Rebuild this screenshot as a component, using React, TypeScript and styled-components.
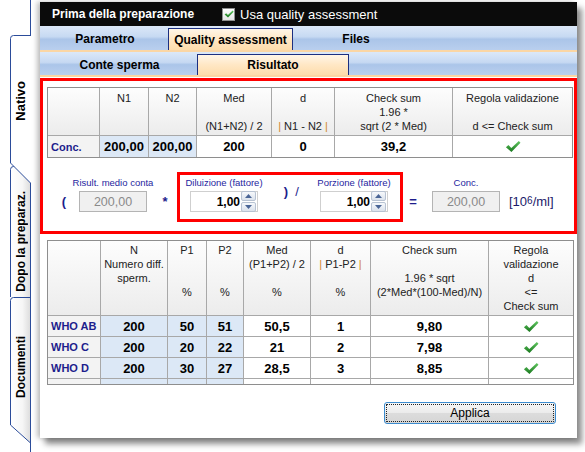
import * as React from 'react'
import styled, { createGlobalStyle } from 'styled-components'

const GlobalStyle = createGlobalStyle`
  html, body {
    margin: 0;
    padding: 0;
    background: #fff;
  }
  body {
    font-family: 'Liberation Sans', Arial, sans-serif;
  }
`

const NAVY = '#1d1d8c'
const TAB_LINE = '#2b4c9a'

const Page = styled.div`
  display: flex;
  width: 585px;
  height: 452px;
  overflow: hidden;
`

/* ---------- left vertical tabs ---------- */

const SideStrip = styled.div`
  width: 40px;
  flex: none;
  display: flex;
  flex-direction: column;
`

const SideTop = styled.div`
  width: 31px;
  height: 35px;
  flex: none;
  box-sizing: border-box;
  border-right: 1px solid ${TAB_LINE};
`

const SideTab = styled.div<{ $h: number; $overlap?: number; $front?: boolean; $padTop?: number; $padBottom?: number }>`
  position: relative;
  width: 31px;
  height: ${p => p.$h}px;
  flex: none;
  margin-top: ${p => -(p.$overlap || 0)}px;
  z-index: ${p => (p.$front ? 2 : 1)};
  box-sizing: border-box;
  padding: ${p => p.$padTop || 0}px 0 ${p => p.$padBottom || 0}px 10px;
  display: flex;
  align-items: center;
  justify-content: center;
`

const TabShape = styled.svg`
  position: absolute;
  left: 0;
  top: 0;
  z-index: -1;
`

const SideLabel = styled.span<{ $size: number }>`
  writing-mode: vertical-rl;
  transform: rotate(180deg);
  font-weight: bold;
  font-size: ${p => p.$size}px;
  color: #000;
  white-space: nowrap;
`

const SideTabs: React.FC = () => (
  <SideStrip>
    <SideTop />
    <SideTab $h={148} $front $padBottom={16}>
      <TabShape width={31} height={148}>
        <path d="M31 0.5 H13.5 Q10.5 0.5 10.5 3.5 V128 L30.5 148 H31 Z" fill="#fff" />
        <path d="M31 0.5 H13.5 Q10.5 0.5 10.5 3.5 V128 L30.5 148" fill="none" stroke={TAB_LINE} />
      </TabShape>
      <SideLabel $size={13}>Nativo</SideLabel>
    </SideTab>
    <SideTab $h={131} $overlap={17} $padTop={20}>
      <TabShape width={31} height={131}>
        <defs>
          <linearGradient id="tabFillA" x1="0" x2="1" y1="0" y2="0">
            <stop offset="0" stopColor="#ffffff" />
            <stop offset="0.6" stopColor="#f6f6f6" />
            <stop offset="1" stopColor="#dcdcdc" />
          </linearGradient>
        </defs>
        <path d="M30.5 0.5 H13.5 Q10.5 0.5 10.5 3.5 V131 H30.5 Z" fill="url(#tabFillA)" />
        <path d="M30.5 0.5 H13.5 Q10.5 0.5 10.5 3.5 V131 M30.5 0 V131" fill="none" stroke={TAB_LINE} />
      </TabShape>
      <SideLabel $size={12}>Dopo la preparaz.</SideLabel>
    </SideTab>
    <SideTab $h={155} $padBottom={14}>
      <TabShape width={31} height={155}>
        <defs>
          <linearGradient id="tabFillB" x1="0" x2="1" y1="0" y2="0">
            <stop offset="0" stopColor="#ffffff" />
            <stop offset="0.6" stopColor="#f6f6f6" />
            <stop offset="1" stopColor="#dcdcdc" />
          </linearGradient>
        </defs>
        <path d="M30.5 0.5 H13.5 Q10.5 0.5 10.5 3.5 V128 L30.5 146 Z" fill="url(#tabFillB)" />
        <path d="M30.5 0.5 H13.5 Q10.5 0.5 10.5 3.5 V128 L30.5 146 M30.5 0 V155" fill="none" stroke={TAB_LINE} />
      </TabShape>
      <SideLabel $size={12}>Documenti</SideLabel>
    </SideTab>
  </SideStrip>
)

/* ---------- dialog ---------- */

const Dialog = styled.div`
  width: 537px;
  height: 436px;
  margin-top: 2px;
  flex: none;
  display: flex;
  flex-direction: column;
  background: #fff;
  box-shadow: -3px 0 5px rgba(0, 0, 0, 0.25), 5px 6px 6px rgba(0, 0, 0, 0.45);
`

const TitleBar = styled.div`
  height: 24px;
  flex: none;
  display: flex;
  align-items: center;
  padding-left: 12px;
  background: #0b0b0b;
  color: #fff;
`

const TitleText = styled.span`
  font-weight: bold;
  font-size: 12px;
`

const CheckLabel = styled.span`
  display: flex;
  align-items: center;
  gap: 5px;
  margin-left: 28px;
  font-size: 13px;
`

const CheckBox = styled.span`
  width: 13px;
  height: 13px;
  box-sizing: border-box;
  border: 1px solid #8e8f8f;
  background: linear-gradient(#ffffff, #e4e4e4);
  display: flex;
  align-items: center;
  justify-content: center;
`

const TabRow = styled.div<{ $h: number }>`
  height: ${p => p.$h}px;
  flex: none;
  display: flex;
  align-items: flex-end;
  padding-left: 2px;
  background: linear-gradient(#dce8f8 0%, #c6d9f2 45%, #abc5e9 55%, #b9cfee 100%);
`

const TabItem = styled.div<{ $w: number; $active?: boolean }>`
  width: ${p => p.$w}px;
  height: calc(100% - 2px);
  box-sizing: border-box;
  display: flex;
  align-items: center;
  justify-content: center;
  font-weight: bold;
  font-size: 12px;
  color: #000;
  ${p =>
    p.$active
      ? `
    border: 1px solid #1c2f80;
    border-bottom: none;
    background: linear-gradient(#fff6e8, #ffe7c4 50%, #fddcab);
  `
      : ''}
`

const TabDivider = styled.div`
  height: 2px;
  flex: none;
  background: #fbd6a4;
`

const Content = styled.div`
  flex: 1;
  display: flex;
  flex-direction: column;
  padding-top: 1px;
`

const Highlight = styled.div`
  height: 156px;
  flex: none;
  box-sizing: border-box;
  border: 3px solid #ff0000;
  padding: 6px 1px 0 4px;
  display: flex;
  flex-direction: column;
`

/* ---------- tables ---------- */

const Frame = styled.div<{ $w: number; $h?: number; $ml?: number; $mt?: number }>`
  width: ${p => p.$w}px;
  ${p => (p.$h ? `height: ${p.$h}px;` : '')}
  margin-left: ${p => p.$ml || 0}px;
  margin-top: ${p => p.$mt || 0}px;
  box-sizing: border-box;
  border: 1px solid #8e8e8e;
  overflow: hidden;
  flex: none;
`

const Grid = styled.div<{ $cols: number[]; $head: number; $row: number }>`
  display: grid;
  grid-template-columns: ${p => p.$cols.map(c => `${c}px`).join(' ')};
  grid-template-rows: ${p => p.$head}px;
  grid-auto-rows: ${p => p.$row}px;
  gap: 1px;
  background: #a8a8a8;
`

const HeadCell = styled.div<{ $pt: number }>`
  background: linear-gradient(#fdfdfd, #ececec);
  padding-top: ${p => p.$pt}px;
  text-align: center;
  font-size: 11px;
  color: #222;
`

const HeadLine = styled.div`
  height: 14px;
  line-height: 14px;
  white-space: nowrap;
`

const Bar = styled.span`
  color: #d2862a;
`

const LabelCell = styled.div`
  background: #f3f3f3;
  color: ${NAVY};
  font-weight: bold;
  font-size: 11px;
  display: flex;
  align-items: center;
  padding-left: 3px;
  white-space: nowrap;
`

const ValueCell = styled.div<{ $tint?: boolean }>`
  background: ${p => (p.$tint ? '#dce8f6' : '#fff')};
  font-weight: bold;
  font-size: 13px;
  color: #000;
  display: flex;
  align-items: center;
  justify-content: center;
`

const CheckMark: React.FC<{ size?: number }> = ({ size = 16 }) => (
  <svg width={size} height={size * 0.8} viewBox="0 0 16 13">
    <defs>
      <linearGradient id="okGrad" x1="0" x2="0" y1="0" y2="1">
        <stop offset="0" stopColor="#62c862" />
        <stop offset="1" stopColor="#17761c" />
      </linearGradient>
    </defs>
    <path d="M0.8 7.4 L3.4 5.2 L6.3 8.2 L13.9 1 L15.6 2.7 L6.4 12.2 Z" fill="url(#okGrad)" />
  </svg>
)

const renderHead = (lines: React.ReactNode[]) =>
  lines.map((l, i) => <HeadLine key={i}>{l === '' ? '\u00a0' : l}</HeadLine>)

const concHead: React.ReactNode[][] = [
  [],
  ['N1'],
  ['N2'],
  ['Med', '', '(N1+N2) / 2'],
  ['d', '', <><Bar>|</Bar> N1 - N2 <Bar>|</Bar></>],
  ['Check sum', '1.96 *', 'sqrt (2 * Med)'],
  ['Regola validazione', '', 'd <= Check sum'],
]

const morphHead: React.ReactNode[][] = [
  [],
  ['N', 'Numero diff.', 'sperm.'],
  ['P1', '', '', '%'],
  ['P2', '', '', '%'],
  ['Med', '(P1+P2) / 2', '', '%'],
  ['d', <><Bar>|</Bar> P1-P2 <Bar>|</Bar></>, '', '%'],
  ['Check sum', '', '1.96 * sqrt', '(2*Med*(100-Med)/N)'],
  ['Regola', 'validazione', 'd', '<=', 'Check sum'],
]

interface MorphRow {
  label: string
  n: string
  p1: string
  p2: string
  med: string
  d: string
  check: string
}

const morphRows: MorphRow[] = [
  { label: 'WHO AB', n: '200', p1: '50', p2: '51', med: '50,5', d: '1', check: '9,80' },
  { label: 'WHO C', n: '200', p1: '20', p2: '22', med: '21', d: '2', check: '7,98' },
  { label: 'WHO D', n: '200', p1: '30', p2: '27', med: '28,5', d: '3', check: '8,85' },
  { label: 'Mot. A', n: '200', p1: '45', p2: '44', med: '44,5', d: '1', check: '9,74' },
]

/* ---------- calculation row ---------- */

const CalcRow = styled.div`
  display: flex;
  align-items: flex-end;
  margin-top: 14px;
  height: 50px;
  flex: none;
`

const Sym = styled.span<{ $w: number; $ml?: number; $thin?: boolean }>`
  width: ${p => p.$w}px;
  margin-left: ${p => p.$ml || 0}px;
  height: 21px;
  margin-bottom: 10px;
  display: flex;
  align-items: center;
  justify-content: center;
  color: ${NAVY};
  font-weight: ${p => (p.$thin ? 'normal' : 'bold')};
  font-size: 13px;
  flex: none;
`

const Field = styled.div<{ $w: number; $ml?: number; $inBox?: boolean }>`
  width: ${p => p.$w}px;
  margin-left: ${p => p.$ml || 0}px;
  margin-bottom: ${p => (p.$inBox ? 0 : 10)}px;
  display: flex;
  flex-direction: column;
  align-items: center;
  flex: none;
`

const FieldLabel = styled.div`
  height: 12px;
  line-height: 12px;
  margin-bottom: 2px;
  font-size: 9.5px;
  color: #2626a0;
  white-space: nowrap;
`

const ReadOnlyBox = styled.div`
  width: 68px;
  height: 21px;
  box-sizing: border-box;
  border: 1px solid #b4b4b4;
  background: #f0f0f0;
  color: #8a8a8a;
  font-size: 12.5px;
  display: flex;
  align-items: center;
  justify-content: center;
`

const SpinBox = styled.div`
  width: 68px;
  height: 21px;
  box-sizing: border-box;
  border: 1px solid #cfcfcf;
  background: #fff;
  display: flex;
  align-items: center;
  padding-right: 1px;
`

const SpinValue = styled.span`
  flex: 1;
  text-align: right;
  font-weight: bold;
  font-size: 12px;
  color: #000;
  padding-right: 1px;
`

const SpinButtons = styled.div`
  width: 15px;
  display: flex;
  flex-direction: column;
  gap: 1px;
`

const SpinButton = styled.div`
  height: 8px;
  border: 1px solid #b7c2d2;
  border-radius: 2px;
  background: linear-gradient(#f6f8fb, #dbe2ec);
  display: flex;
  align-items: center;
  justify-content: center;
`

const ParamBox = styled.div`
  height: 50px;
  box-sizing: border-box;
  margin-left: 6px;
  padding: 2px 6px 7px 4px;
  border: 3px solid #ff0000;
  display: flex;
  align-items: flex-end;
  flex: none;
`

const Unit = styled.span`
  margin-left: 3px;
  margin-bottom: 10px;
  height: 21px;
  display: flex;
  align-items: center;
  font-size: 13px;
  color: #1a1a6a;
  white-space: nowrap;
  sup {
    font-size: 10px;
    line-height: 0;
    position: relative;
    top: -1px;
  }
`

const Triangle: React.FC<{ up?: boolean }> = ({ up }) => (
  <svg width="7" height="4" viewBox="0 0 7 4">
    <path d={up ? 'M0 4 L3.5 0 L7 4 Z' : 'M0 0 L3.5 4 L7 0 Z'} fill="#4a6596" />
  </svg>
)

const Spin: React.FC<{ value: string }> = ({ value }) => (
  <SpinBox>
    <SpinValue>{value}</SpinValue>
    <SpinButtons>
      <SpinButton><Triangle up /></SpinButton>
      <SpinButton><Triangle /></SpinButton>
    </SpinButtons>
  </SpinBox>
)

/* ---------- footer ---------- */

const Footer = styled.div`
  display: flex;
  justify-content: flex-end;
  padding-right: 21px;
  margin-top: 17px;
`

const ApplyButton = styled.button`
  width: 172px;
  height: 22px;
  padding: 0;
  border: 1px solid #3c8ccf;
  border-radius: 3px;
  background: linear-gradient(#f7f7f7, #ebebeb 50%, #dcdcdc 51%, #d6d6d6);
  font-family: 'Liberation Sans', Arial, sans-serif;
  font-size: 12px;
  color: #000;
  outline: 1px dotted #222;
  outline-offset: -3px;
`

const CONC_COLS = [51, 48, 47, 74, 62, 117, 119]
const MORPH_COLS = [52, 66, 38, 36, 66, 59, 117, 84]

export default function App() {
  return (
    <Page>
      <GlobalStyle />
      <SideTabs />
      <Dialog>
        <TitleBar>
          <TitleText>Prima della preparazione</TitleText>
          <CheckLabel>
            <CheckBox>
              <CheckMark size={10} />
            </CheckBox>
            Usa quality assessment
          </CheckLabel>
        </TitleBar>
        <TabRow $h={24}>
          <TabItem $w={126}>Parametro</TabItem>
          <TabItem $w={125} $active>Quality assessment</TabItem>
          <TabItem $w={126}>Files</TabItem>
        </TabRow>
        <TabDivider />
        <TabRow $h={23}>
          <TabItem $w={155}>Conte sperma</TabItem>
          <TabItem $w={152} $active>Risultato</TabItem>
        </TabRow>
        <TabDivider />
        <Content>
          <Highlight>
            <Frame $w={526}>
              <Grid $cols={CONC_COLS} $head={47} $row={21}>
                {concHead.map((h, i) => (
                  <HeadCell key={i} $pt={3}>{renderHead(h)}</HeadCell>
                ))}
                <LabelCell>Conc.</LabelCell>
                <ValueCell $tint>200,00</ValueCell>
                <ValueCell $tint>200,00</ValueCell>
                <ValueCell>200</ValueCell>
                <ValueCell>0</ValueCell>
                <ValueCell>39,2</ValueCell>
                <ValueCell><CheckMark /></ValueCell>
              </Grid>
            </Frame>
            <CalcRow>
              <Sym $w={12} $ml={11}>(</Sym>
              <Field $w={84} $ml={1}>
                <FieldLabel>Risult. medio conta</FieldLabel>
                <ReadOnlyBox>200,00</ReadOnlyBox>
              </Field>
              <Sym $w={12} $ml={4}>*</Sym>
              <ParamBox>
                <Field $w={80} $inBox>
                  <FieldLabel>Diluizione (fattore)</FieldLabel>
                  <Spin value="1,00" />
                </Field>
                <Sym $w={10} $ml={17}>)</Sym>
                <Sym $w={10} $ml={1} $thin>/</Sym>
                <Field $w={80} $ml={12} $inBox>
                  <FieldLabel>Porzione (fattore)</FieldLabel>
                  <Spin value="1,00" />
                </Field>
              </ParamBox>
              <Sym $w={12} $ml={4}>=</Sym>
              <Field $w={80} $ml={7}>
                <FieldLabel>Conc.</FieldLabel>
                <ReadOnlyBox>200,00</ReadOnlyBox>
              </Field>
              <Unit>
                [10<sup>6</sup>/ml]
              </Unit>
            </CalcRow>
          </Highlight>
          <Frame $w={527} $h={145} $ml={7} $mt={6}>
            <Grid $cols={MORPH_COLS} $head={74} $row={20}>
              {morphHead.map((h, i) => (
                <HeadCell key={i} $pt={2}>{renderHead(h)}</HeadCell>
              ))}
              {morphRows.map(r => (
                <React.Fragment key={r.label}>
                  <LabelCell>{r.label}</LabelCell>
                  <ValueCell $tint>{r.n}</ValueCell>
                  <ValueCell $tint>{r.p1}</ValueCell>
                  <ValueCell $tint>{r.p2}</ValueCell>
                  <ValueCell>{r.med}</ValueCell>
                  <ValueCell>{r.d}</ValueCell>
                  <ValueCell>{r.check}</ValueCell>
                  <ValueCell><CheckMark /></ValueCell>
                </React.Fragment>
              ))}
            </Grid>
          </Frame>
          <Footer>
            <ApplyButton>Applica</ApplyButton>
          </Footer>
        </Content>
      </Dialog>
    </Page>
  )
}
